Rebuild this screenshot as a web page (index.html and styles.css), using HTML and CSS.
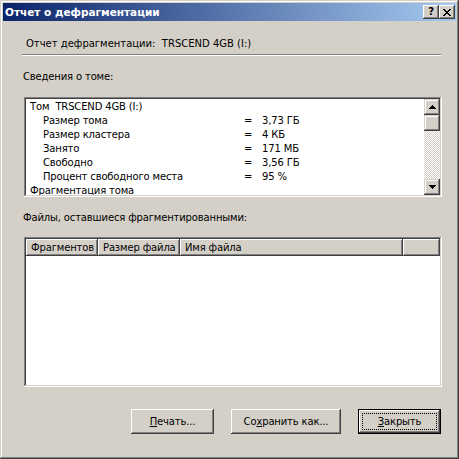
FILE: index.html
```html
<!DOCTYPE html>
<html lang="ru">
<head>
<meta charset="utf-8">
<title>Отчет о дефрагментации</title>
<link rel="stylesheet" href="styles.css">
</head>
<body>
<div class="window">
  <div class="titlebar">
    <span class="title">Отчет о дефрагментации</span>
    <div class="caption-btns">
      <div class="cap cap-help">?</div>
      <div class="cap cap-close">
        <svg width="8" height="7" viewBox="0 0 8 7"><path d="M0 0h2v1h1v1h2V1h1V0h2v1H7v1H6v1H5v1h1v1h1v1h1v1H6V6H5V5H3v1H2v1H0V6h1V5h1V4h1V3H2V2H1V1H0z" fill="#000"/></svg>
      </div>
    </div>
  </div>
  <div class="client">
    <div class="summary">Отчет дефрагментации:  TRSCEND 4GB (I:)</div>
    <div class="sep"></div>
    <div class="label">Сведения о томе:</div>
    <div class="listbox">
      <div class="lb-content">
        <div class="row head">Том  TRSCEND 4GB (I:)</div>
        <div class="row"><span class="k">Размер тома</span><span>=</span><span>3,73 ГБ</span></div>
        <div class="row"><span class="k">Размер кластера</span><span>=</span><span>4 КБ</span></div>
        <div class="row"><span class="k">Занято</span><span>=</span><span>171 МБ</span></div>
        <div class="row"><span class="k">Свободно</span><span>=</span><span>3,56 ГБ</span></div>
        <div class="row"><span class="k">Процент свободного места</span><span>=</span><span>95 %</span></div>
        <div class="row head">Фрагментация тома</div>
      </div>
      <div class="vscroll">
        <div class="sb-btn"><svg width="7" height="4" viewBox="0 0 7 4"><path d="M3 0h1v1h1v1h1v1h1v1H0V3h1V2h1V1h1z" fill="#000"/></svg></div>
        <div class="sb-btn"></div>
        <div class="sb-track"></div>
        <div class="sb-btn"><svg width="7" height="4" viewBox="0 0 7 4"><path d="M0 0h7v1H6v1H5v1H4v1H3V3H2V2H1V1H0z" fill="#000"/></svg></div>
      </div>
    </div>
    <div class="label">Файлы, оставшиеся фрагментированными:</div>
    <div class="listview">
      <div class="lv-header">
        <div class="hcell col-frag">Фрагментов</div>
        <div class="hcell col-size">Размер файла</div>
        <div class="hcell col-name">Имя файла</div>
        <div class="hcell col-rest"></div>
      </div>
      <div class="lv-body"></div>
    </div>
    <div class="buttons">
      <div class="btn"><u>П</u>ечать...</div>
      <div class="btn wide">Со<u>х</u>ранить как...</div>
      <div class="btn default"><u>З</u>акрыть</div>
    </div>
  </div>
</div>
</body>
</html>
```
FILE: styles.css
```css
* { box-sizing: border-box; }
body {
  margin: 0;
  background: #D4D0C8;
  font-family: "DejaVu Sans", sans-serif;
  font-size: 10px;
  letter-spacing: -0.15px;
  color: #000;
}
.window {
  width: 459px;
  height: 459px;
  padding: 3px;
  background: #D4D0C8;
  box-shadow: inset -1px -1px #404040, inset 1px 1px #D4D0C8, inset -2px -2px #808080, inset 2px 2px #fff;
  display: flex;
  flex-direction: column;
}
.titlebar {
  height: 18px;
  display: flex;
  align-items: center;
  padding: 0 1px 0 2px;
  background: linear-gradient(to right, #0A246A, #A6CAF0);
}
.title {
  flex: 1;
  color: #fff;
  font-weight: bold;
  font-size: 10.5px;
  letter-spacing: 0;
  line-height: 18px;
}
.caption-btns { display: flex; }
.cap {
  width: 16px;
  height: 14px;
  background: #D4D0C8;
  box-shadow: inset -1px -1px #404040, inset 1px 1px #fff, inset -2px -2px #808080, inset 2px 2px #D4D0C8;
  display: flex;
  align-items: center;
  justify-content: center;
  font-weight: bold;
  font-size: 10px;
  line-height: 14px;
}
.cap-help { padding-bottom: 1px; }
.client {
  flex: 1;
  padding: 16px 14px 0 19px;
  display: flex;
  flex-direction: column;
}
.summary {
  margin-left: 4px;
  line-height: 13px;
  height: 13px;
  white-space: pre;
  letter-spacing: 0;
}
.sep {
  margin-top: 4px;
  margin-right: 1px;
  height: 2px;
  border-top: 1px solid #808080;
  border-bottom: 1px solid #fff;
}
.label {
  margin-top: 14px;
  margin-left: 1px;
  height: 13px;
  line-height: 13px;
}
.listbox {
  margin-top: 14px;
  margin-left: 2px;
  height: 100px;
  padding: 2px;
  background: #fff;
  box-shadow: inset -1px -1px #fff, inset 1px 1px #808080, inset -2px -2px #D4D0C8, inset 2px 2px #404040;
  display: flex;
}
.lb-content {
  flex: 1;
  overflow: hidden;
  padding-top: 1px;
}
.row {
  height: 14px;
  line-height: 14px;
  padding-left: 4px;
  display: grid;
  grid-template-columns: 214px 18px 1fr;
  white-space: pre;
}
.row.head { display: block; }
.row .k { padding-left: 13px; }
.vscroll {
  width: 16px;
  display: flex;
  flex-direction: column;
}
.sb-btn {
  width: 16px;
  height: 16px;
  background: #D4D0C8;
  box-shadow: inset -1px -1px #404040, inset 1px 1px #D4D0C8, inset -2px -2px #808080, inset 2px 2px #fff;
  display: flex;
  align-items: center;
  justify-content: center;
}
.sb-btn svg { display: block; }
.sb-track {
  flex: 1;
  background-image: conic-gradient(#fff 25%, #D4D0C8 0 50%, #fff 0 75%, #D4D0C8 0);
  background-size: 2px 2px;
}
.listview {
  margin-top: 13px;
  margin-left: 2px;
  height: 150px;
  padding: 2px;
  background: #fff;
  box-shadow: inset -1px -1px #fff, inset 1px 1px #808080, inset -2px -2px #D4D0C8, inset 2px 2px #404040;
  display: flex;
  flex-direction: column;
}
.lv-header {
  display: flex;
  height: 17px;
}
.hcell {
  height: 17px;
  line-height: 17px;
  padding-left: 5px;
  background: #D4D0C8;
  box-shadow: inset -1px -1px #404040, inset 1px 1px #fff, inset -2px -2px #808080;
  white-space: nowrap;
  overflow: hidden;
}
.col-frag { width: 72px; }
.col-size { width: 82px; }
.col-name { width: 223px; }
.col-rest { flex: 1; }
.lv-body { flex: 1; }
.buttons {
  margin-top: 22px;
  margin-right: 1px;
  display: flex;
  justify-content: flex-end;
  gap: 17px;
}
.btn {
  position: relative;
  width: 83px;
  height: 25px;
  line-height: 25px;
  text-align: center;
  background: #D4D0C8;
  box-shadow: inset -1px -1px #404040, inset 1px 1px #fff, inset -2px -2px #808080, inset 2px 2px #D4D0C8;
}
.btn.wide { width: 110px; }
.btn.default {
  box-shadow: inset 0 0 0 1px #000, inset -2px -2px #404040, inset 2px 2px #fff, inset -3px -3px #808080;
}
.btn.default::after {
  content: "";
  position: absolute;
  inset: 4px;
  border: 1px dotted #000;
}
```
